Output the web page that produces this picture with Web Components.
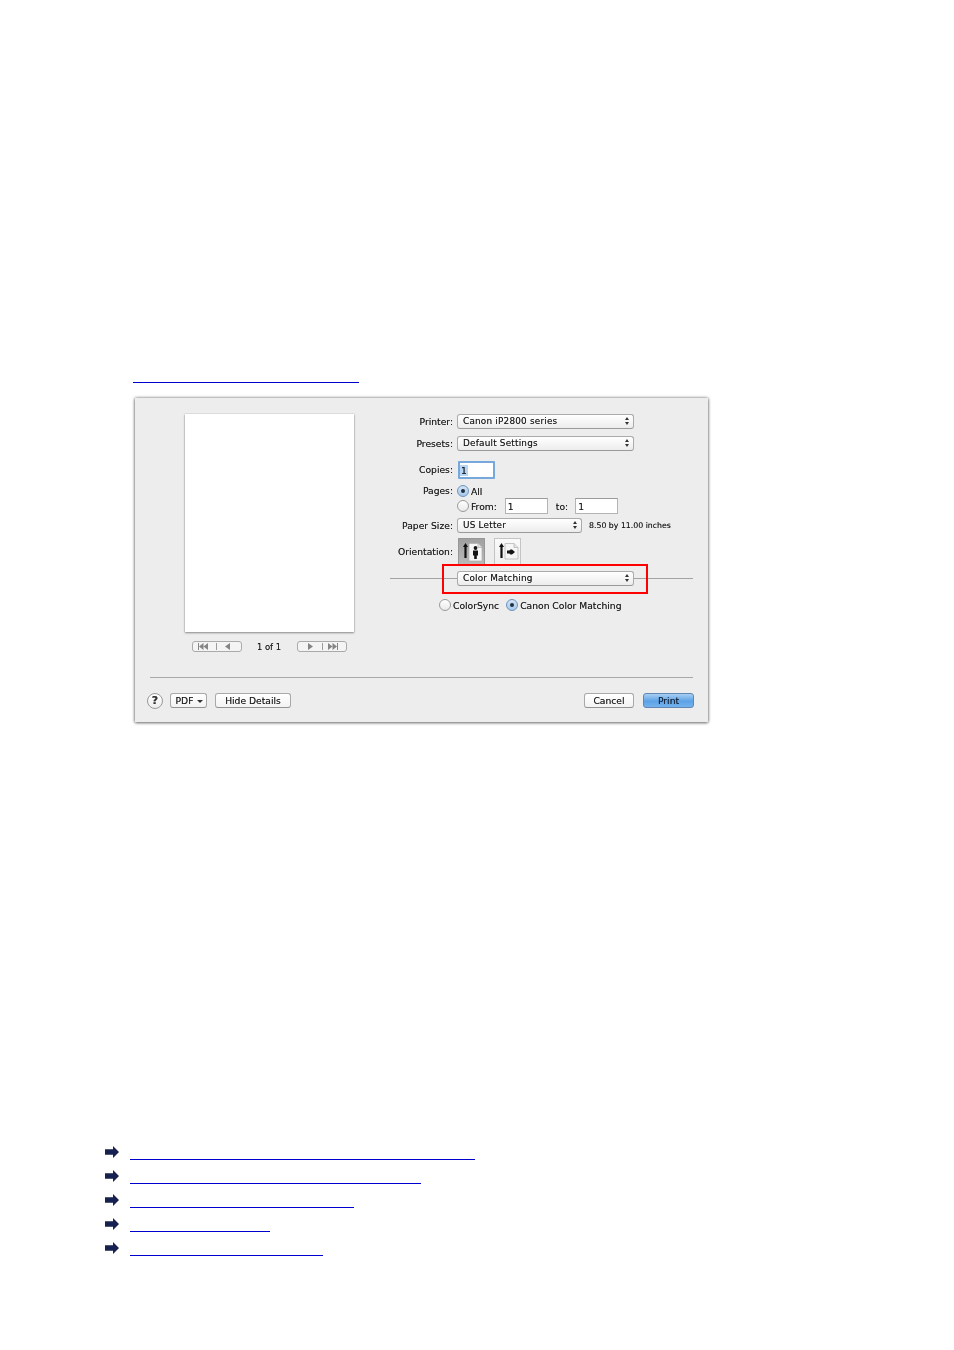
<!DOCTYPE html>
<html lang="en"><head><meta charset="utf-8"><title>Color Matching</title>
<style>
html,body{margin:0;background:#fff}
body{font-family:"DejaVu Sans",sans-serif;width:954px;height:1350px;overflow:hidden}
x-page{display:block}
</style></head><body>
<x-page>
  <x-print-dialog slot="dialog"></x-print-dialog>
  <x-link-row slot="links" w="345"></x-link-row>
  <x-link-row slot="links" w="291"></x-link-row>
  <x-link-row slot="links" w="224"></x-link-row>
  <x-link-row slot="links" w="140"></x-link-row>
  <x-link-row slot="links" w="193"></x-link-row>
</x-page>
<script>
const def=(name,html)=>customElements.define(name,class extends HTMLElement{
  connectedCallback(){ if(this.shadowRoot) return;
    const s=this.attachShadow({mode:'open'});
    s.innerHTML=typeof html==='function'?html(this):html; }
});
const ARROWS=`<svg width="4" height="8" viewBox="0 0 4 8"><path d="M2 0 4 2.900H0zM2 8 0 5.100h4z" fill="#333"/></svg>`;
def('x-page',`<style>
:host{display:block}
.top{height:382px}
.anchor{display:block;width:226px;height:1px;background:#0000cc;margin-left:133px}
.dlg{margin:15px 0 0 135px}
.links{margin:423.500px 0 0 105px;display:flex;flex-direction:column}
</style><div class="top"></div><a class="anchor"></a>
<div class="dlg"><slot name="dialog"></slot></div>
<div class="links"><slot name="links"></slot></div>`);
def('x-link-row',el=>`<style>
:host{display:flex;height:24px;align-items:flex-start}
svg{flex:none;display:block;margin-right:11px}
i{display:block;height:1px;background:#0000cc;margin-top:13.500px;width:${el.getAttribute('w')}px}
</style><svg width="14" height="12" viewBox="0 0 14 12"><path d="M0 3.200h8V0l6 6-6 6V8.800H0z" fill="#16214f"/></svg><i></i>`);
def('x-select',el=>`<style>
:host{display:flex;align-items:center;justify-content:space-between;box-sizing:border-box;height:15px;padding:0 4px 1px 5px;
border:1px solid #ababab;border-bottom-color:#9a9a9a;border-radius:3px;background:linear-gradient(#fff,#f4f4f4 60%,#ececec);
font-size:8.900px;letter-spacing:.2px;color:#1c1c1c;width:${el.getAttribute('w')}px;flex:none}
svg{display:block}
</style><span><slot></slot></span>${ARROWS}`);
def('x-btn',el=>`<style>
:host{display:flex;align-items:center;justify-content:center;box-sizing:border-box;height:15px;flex:none;
border:1px solid #a9a9a9;border-bottom-color:#929292;border-radius:3px;background:linear-gradient(#fff,#f3f3f3);
font-size:9.200px;color:#1c1c1c;width:${el.getAttribute('w')}px}
:host([primary]){border-color:#5f86b5;background:linear-gradient(#a9cff2,#5da2e6 55%,#74b2ee);color:#14233a}
</style><slot></slot>`);
def('x-radio',el=>`<style>
:host{display:flex;align-items:center;gap:2px;font-size:9.200px;color:#1c1c1c;height:14px;flex:none}
.c{box-sizing:border-box;width:12px;height:12px;border-radius:50%;border:1px solid #9b9b9b;background:linear-gradient(#fff,#e9e9e9);display:flex;align-items:center;justify-content:center;flex:none}
:host([on]) .c{border-color:#6c93bd;background:linear-gradient(#d2e4f6,#a6c9ec)}
:host([on]) .c::after{content:"";width:4.500px;height:4.500px;border-radius:50%;background:#22303f}
</style><span class="c"></span><span><slot></slot></span>`);
def('x-field',el=>`<style>
:host{display:flex;align-items:center;box-sizing:border-box;height:16px;flex:none;padding-left:2px;border:1px solid #b4b4b4;border-top-color:#9c9c9c;background:#fff;font-size:9.200px;color:#1c1c1c;width:${el.getAttribute('w')}px}
:host([focus]){height:18px;padding-left:0;border:2px solid #76a8dc;border-radius:1px}
:host([focus]) span{background:#b7d6f6;padding:0 1px}
</style><span><slot></slot></span>`);
def('x-row',el=>`<style>
:host{display:grid;grid-template-columns:63px 1fr;column-gap:4px;align-items:center;height:${el.getAttribute('h')}px;margin-top:${el.getAttribute('t')||0}px;font-size:9.200px;color:#1c1c1c}
.l{text-align:right;white-space:nowrap;justify-self:end;margin-top:-1px}
.c{display:flex;align-items:center;min-width:0}
</style><div class="l"><slot name="label"></slot></div><div class="c"><slot></slot></div>`);
def('x-orient',el=>`<style>
:host{display:block;box-sizing:border-box;width:27px;height:27px;flex:none;border:1px solid #c4c4c4;border-bottom-color:#aaa;background:linear-gradient(#fafafa,#efefef)}
:host([on]){background:linear-gradient(#a0a0a0,#b9b9b9);border-color:#979797}
svg{display:block;margin:2px 0 0 2px}
</style><svg width="23" height="21" viewBox="0 0 23 21">
<path d="M4.500 2 7 6H5.600v11H3.400V6H2z" fill="#111"/>
${el.hasAttribute('land')
 ?`<path d="M8 2.500h9l4 4v11.500H8z" fill="#f6f6f6" stroke="#b0b0b0" stroke-width=".7"/><path d="M17 2.500v4h4" fill="#e0e0e0" stroke="#b0b0b0" stroke-width=".7"/><path d="M10 9.500h2.500a1.500 1.500 0 0 1 1.500-1h1l3 2.500-3 2.500h-1a1.500 1.500 0 0 1-1.500-1H10z" fill="#151515"/>`
 :`<path d="M8 2.500h9l4 4V20H8z" fill="#f6f6f6" stroke="#b0b0b0" stroke-width=".7"/><path d="M17 2.500v4h4" fill="#e0e0e0" stroke="#b0b0b0" stroke-width=".7"/><circle cx="14.500" cy="7" r="1.900" fill="#151515"/><path d="M12 9.500h5v5h-1.200V18h-2.600v-3.500H12z" fill="#151515"/>`}
</svg>`);
def('x-pager',el=>{const back=el.hasAttribute('back');
 return `<style>
:host{display:block;box-sizing:border-box;width:50px;height:11px;flex:none;border:1px solid #aaa;border-radius:3px;background:#f4f4f4}
svg{display:block;margin:0}
</style><svg width="48" height="9" viewBox="0 0 48 9" fill="#858585">${back
 ?`<path d="M5 1h1v7H5zM10.500 1v7L6 4.500zM15 1v7l-4.500-3.500zM23 1h.8v7H23zM37 1v7l-5-3.500z"/>`
 :`<path d="M10 1v7l5-3.500zM24 1h.8v7H24zM30 1v7l4.500-3.500zM34.500 1v7L39 4.500zM39 1h1v7h-1z"/>`}</svg>`});
def('x-print-dialog',`<style>
:host{display:block;width:573px;height:324px;box-sizing:border-box;background:#ededed;
box-shadow:0 0 3px rgba(0,0,0,.5),0 1px 3px rgba(0,0,0,.4);filter:blur(.45px);font-family:"DejaVu Sans",sans-serif;text-shadow:0 0 .6px rgba(0,0,0,.55)}
.main{display:flex;height:279px;box-sizing:border-box;padding:16px 0 0 50px;gap:36px}
.left{width:169px;flex:none;display:flex;flex-direction:column;align-items:center}
.sheet{width:169px;height:218px;background:#fff;box-shadow:0 1px 2px rgba(0,0,0,.4),0 0 1px rgba(0,0,0,.25)}
.pg{display:flex;align-items:center;justify-content:space-between;width:155px;margin:9px 1px 0 0;font-size:8.400px;color:#1c1c1c}
.right{width:303px;flex:none;position:relative}
.ln{height:1px;background:#a3a3a3}
.l1{width:67px;flex:none}
.l2{flex:1}
.sep{display:flex;align-items:center;height:15px;margin-top:6px}
.red{position:absolute;left:52px;top:150px;width:206px;height:30px;box-sizing:border-box;border:2px solid #f00}
.radios{display:flex;justify-content:flex-start;gap:7px;height:14px;margin:12px 0 0 49px}
.rule{height:1px;background:#a8a8a8;margin:0 15px}
.bot{display:flex;align-items:center;height:15px;margin-top:15px;padding:0 14px 0 12px}
.q{box-sizing:border-box;width:16px;height:16px;border-radius:50%;border:1px solid #9a9a9a;background:linear-gradient(#fff,#ececec);display:flex;align-items:center;justify-content:center;font-size:11px;font-weight:700;color:#333;flex:none}
.dn{display:inline-block;width:0;height:0;border:3px solid transparent;border-top:3.500px solid #333;border-bottom:0;margin-left:4px;vertical-align:1.500px}
.sz{font-size:7.800px;margin-left:7px;white-space:nowrap}
.txt{white-space:nowrap;padding-left:2px}
</style>
<div class="main">
 <div class="left"><div class="sheet"></div>
  <div class="pg"><x-pager back></x-pager><span>1 of 1</span><x-pager></x-pager></div></div>
 <div class="right">
  <x-row h="15"><span slot="label">Printer:</span><x-select w="177">Canon iP2800 series</x-select></x-row>
  <x-row h="15" t="7"><span slot="label">Presets:</span><x-select w="177">Default Settings</x-select></x-row>
  <x-row h="18" t="10"><span slot="label">Copies:</span><x-field focus w="37" style="margin-left:1px">1</x-field></x-row>
  <x-row h="14" t="5"><span slot="label">Pages:</span><x-radio on>All</x-radio></x-row>
  <x-row h="16" t="0"><span></span><x-radio>From:</x-radio><x-field w="43" style="margin-left:8px">1</x-field><span style="margin:0 7px 0 8px">to:</span><x-field w="43">1</x-field></x-row>
  <x-row h="15" t="4"><span slot="label">Paper Size:</span><x-select w="125">US Letter</x-select><span class="sz">8.50 by 11.00 inches</span></x-row>
  <x-row h="27" t="5"><span slot="label">Orientation:</span><x-orient on style="margin-left:1px"></x-orient><x-orient land style="margin-left:9px"></x-orient></x-row>
  <div class="sep"><div class="ln l1"></div><x-select w="177">Color Matching</x-select><div class="ln l2"></div></div>
  <div class="radios"><x-radio>ColorSync</x-radio><x-radio on>Canon Color Matching</x-radio></div>
  <div class="red"></div>
 </div>
</div>
<div class="rule"></div>
<div class="bot">
 <span class="q">?</span>
 <x-btn w="37" style="margin-left:7px"><span class="txt">PDF<i class="dn"></i></span></x-btn>
 <x-btn w="76" style="margin-left:8px">Hide Details</x-btn>
 <x-btn w="50" style="margin-left:auto">Cancel</x-btn>
 <x-btn w="51" primary style="margin-left:9px">Print</x-btn>
</div>`);
</script>
</body></html>
